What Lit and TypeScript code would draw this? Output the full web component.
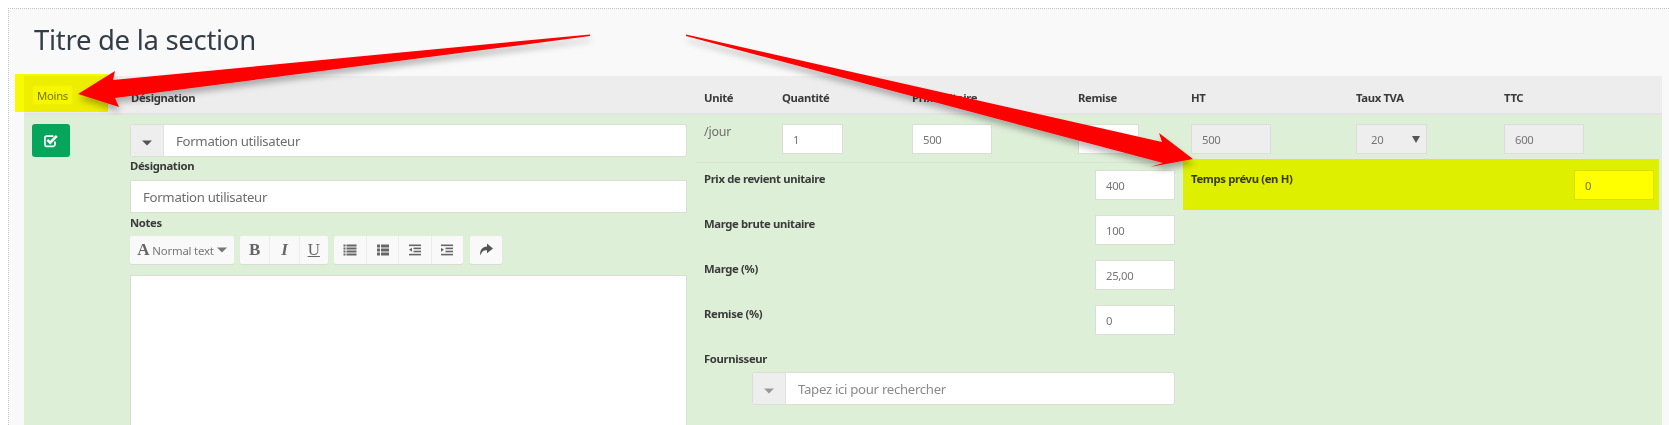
import { LitElement, html, css, svg } from "lit";
import { customElement } from "lit/decorators.js";

const caret = html`<svg class="caret" width="10" height="6" viewBox="0 0 10 6"><path d="M0 0.5h10L5 5.5z" fill="currentColor"/></svg>`;
const g = (body: unknown) => html`<svg width="14" height="14" viewBox="0 0 14 14" fill="#666">${body}</svg>`;
const lines = (x: number, w: number, bullets = false) => svg`${[1, 4, 7, 10].map(
  (y) => svg`<rect x=${x} y=${y + 0.5} width=${w} height="2"/>`
)}${bullets ? [1, 4, 7, 10].map((y) => svg`<rect x="0.5" y=${y + 0.5} width="2" height="2"/>`) : ""}`;

@customElement("app-root")
export class AppRoot extends LitElement {
  static styles = css`
    :host { display: block; width: 1669px; height: 425px; overflow: hidden; background: #fff; position: relative;
      font-family: "Noto Sans", "Open Sans", sans-serif; color: #333; }
    * { box-sizing: border-box; }
    .panel { margin: 8px 0 0 8px; height: 417px; border-top: 1px dotted #c4c4c4; border-left: 1px dotted #c4c4c4;
      background: #f9f9f9; padding: 0 7px 0 15px; overflow: hidden; }
    h1 { margin: 0; padding: 0 0 0 10px; height: 67px; line-height: 62px; font-size: 27.5px; font-weight: 400; color: #333d47; letter-spacing: -0.3px; }
    .label { font-size: 11.3px; font-weight: 700; color: #3a3a3a; line-height: 16px; white-space: nowrap; letter-spacing: -0.35px; }
    .head { display: grid; grid-template-columns: 107px 573px 78px 130px 166px 113px 165px 148px 1fr; height: 39px;
      background: #ededed; border-bottom: 2px solid #e3e3e3; padding-top: 14px; }
    .row { display: grid; grid-template-columns: 106px 557px 1fr; height: 310px; background: #deefd8; padding-top: 9px; }
    .ok { width: 38px; height: 33px; margin-left: 8px; background: #06a55c; border-radius: 3px; display: flex; align-items: center; justify-content: center; }
    .left { display: flex; flex-direction: column; }
    .field { height: 33px; background: #fff; border: 1px solid #d9dfd5; font-size: 13.2px; letter-spacing: -0.3px; color: #6d6d6d; display: flex; align-items: center; flex: none; }
    .plain { padding-left: 12px; }
    .addon { width: 33px; height: 100%; background: #eee; border-right: 1px solid #e3e3e3; color: #555; display: flex; align-items: center; justify-content: center; flex: none; border-radius: 3px 0 0 3px; }
    .addon .caret { margin-top: 4px; }
    .combo { border-radius: 3px; }
    .combo .txt { padding-left: 12px; }
    .left .label.first { margin-top: 1px; margin-bottom: 6px; height: 16px; }
    .left .label.notes { margin-top: 1px; margin-bottom: 6px; height: 16px; padding-top: 1px; }
    .toolbar { display: flex; gap: 6px; height: 28px; margin-bottom: 11px; }
    .grp { display: flex; background: #f9f9f9; border-radius: 2px; box-shadow: 0 1px 1px #d5dcd0; }
    .grp.last { margin-left: 1px; }
    .btn { height: 28px; display: flex; align-items: center; justify-content: center; border-left: 1px solid #ececec; color: #666; }
    .btn:first-child { border-left: 0; }
    .w30 { width: 29.33px; } .w32 { width: 32.25px; }
    .style { width: 104px; gap: 3px; font-size: 11.4px; letter-spacing: -0.2px; color: #777; }
    .style b { font-family: "Liberation Serif", serif; font-size: 17px; color: #666; }
    .serif { font-family: "Liberation Serif", serif; font-size: 17px; font-weight: 700; color: #666; }
    .it { font-style: italic; }
    .un { text-decoration: underline; font-weight: 400; }
    .editor { height: 160px; background: #fff; border: 1px solid #d9dfd5; flex: none; }
    .right { padding: 0 0 0 9px; }
    .top { display: grid; grid-template-columns: 78px 130px 166px 113px 165px 148px 1fr; height: 29px; padding-left: 8px; }
    .top .unit { font-size: 12.4px; letter-spacing: -0.2px; color: #6d6d6d; line-height: 16px; }
    .input { height: 30px; background: #fff; border: 1px solid #d9dfd5; font-size: 11.3px; letter-spacing: -0.3px; color: #757575; display: flex; align-items: center; padding-left: 10px; flex: none; }
    .input.dis, .select { background: #eee; border: 1px solid #dcdcdc; }
    .w60 { width: 61px; } .w80 { width: 80px; } .w71 { width: 71px; }
    .select { justify-content: space-between; padding: 0 6px 0 14px; }
    .rule { height: 1px; background: #d6e4d0; margin-top: 9px; width: 485px; }
    .split { display: grid; grid-template-columns: 479px 1fr; }
    .col { padding: 7px 0 0 8px; }
    .line { display: flex; justify-content: space-between; height: 45px; }
    .line .label { padding-top: 1px; }
    .four { padding-top: 1px; }
    .sup { margin: 0 0 0 48px; width: 423px; }
    .extra { padding: 7px 0 0 16px; height: 45px; display: flex; justify-content: space-between; width: 479px; }
    .extra .label { padding-top: 1px; }
    .highlight { position: absolute; background: #ff0; mix-blend-mode: multiply; pointer-events: none; }
    .h-moins { left: 15px; top: 74px; width: 93px; height: 38px; }
    .h-temps { left: 1183px; top: 159px; width: 476px; height: 51px; }
    .moins { position: absolute; left: 32px; top: 85px; width: 41px; height: 20px; border-radius: 2px; background: #f6f6f6; border: 1px solid #efefef;
      font-size: 11.3px; letter-spacing: -0.3px; color: #777; display: flex; align-items: center; justify-content: center; }
    .arrows { position: absolute; left: 0; top: 0; pointer-events: none; }
    .muted { color: #999; }
    .hint { color: #8a8a8a; }
    .mt5 { margin-top: 5px; }
  `;

  private line(label: string, val: string) {
    return html`<div class="line"><div class="label">${label}</div><div class="input w80">${val}</div></div>`;
  }

  render() {
    return html`
      <div class="panel">
        <h1>Titre de la section</h1>
        <div class="head">
          <div></div>
          <div class="label">Désignation</div>
          <div class="label">Unité</div>
          <div class="label">Quantité</div>
          <div class="label">Prix unitaire</div>
          <div class="label">Remise</div>
          <div class="label">HT</div>
          <div class="label">Taux TVA</div>
          <div class="label">TTC</div>
        </div>
        <div class="row">
          <div>
            <div class="ok">
              <svg width="15" height="14" viewBox="0 0 15 14"><path d="M11 7.5v3a1.8 1.8 0 0 1-1.8 1.8H2.6A1.8 1.8 0 0 1 .9 10.5V4a1.8 1.8 0 0 1 1.8-1.8h6.8" fill="none" stroke="#fff" stroke-width="1.7"/><path d="M3.4 5.8l2.8 2.8 6.6-6.8" fill="none" stroke="#fff" stroke-width="2.5"/></svg>
            </div>
          </div>
          <div class="left">
            <div class="field combo"><div class="addon">${caret}</div><div class="txt">Formation utilisateur</div></div>
            <div class="label first">Désignation</div>
            <div class="field plain">Formation utilisateur</div>
            <div class="label notes">Notes</div>
            <div class="toolbar">
              <div class="grp"><div class="btn style"><b>A</b> Normal text ${caret}</div></div>
              <div class="grp">
                <div class="btn w30 serif">B</div>
                <div class="btn w30 serif it">I</div>
                <div class="btn w30 serif un">U</div>
              </div>
              <div class="grp">
                <div class="btn w32">${g(lines(3.5, 10, true))}</div>
                <div class="btn w32">${g(svg`<rect x="1" y="1.5" width="3" height="3"/><rect x="1" y="5.5" width="3" height="3"/><rect x="1" y="9.5" width="3" height="3"/><rect x="5" y="1.5" width="8" height="3"/><rect x="5" y="5.5" width="8" height="3"/><rect x="5" y="9.5" width="8" height="3"/>`)}</div>
                <div class="btn w32">${g(svg`<rect x="1" y="1.5" width="12" height="1.6"/><rect x="5.5" y="4.6" width="7.5" height="1.6"/><rect x="5.5" y="7.7" width="7.5" height="1.6"/><rect x="1" y="10.8" width="12" height="1.6"/><path d="M4 4.8v4L1 6.8z"/>`)}</div>
                <div class="btn w32">${g(svg`<rect x="1" y="1.5" width="12" height="1.6"/><rect x="5.5" y="4.6" width="7.5" height="1.6"/><rect x="5.5" y="7.7" width="7.5" height="1.6"/><rect x="1" y="10.8" width="12" height="1.6"/><path d="M1 4.8v4l3-2z"/>`)}</div>
              </div>
              <div class="grp last"><div class="btn w32">${g(svg`<path d="M8 .5l6 5-6 4.7V7.2C5 7 3 8 1.4 12.5.4 7 3.6 3.8 8 3.6z" fill="#555"/>`)}</div></div>
            </div>
            <div class="editor"></div>
          </div>
          <div class="right">
            <div class="top">
              <div class="unit">/jour</div>
              <div><div class="input w60">1</div></div>
              <div><div class="input w80">500</div></div>
              <div><div class="input w60"></div></div>
              <div><div class="input w80 dis">500</div></div>
              <div><div class="input w71 select"><span>20</span><svg width="8" height="7" viewBox="0 0 8 7"><path d="M0 0h8L4 7z" fill="#555"/></svg></div></div>
              <div><div class="input w80 dis">600</div></div>
            </div>
            <div class="rule"></div>
            <div class="split">
              <div class="col">
                ${this.line("Prix de revient unitaire", "400")}
                ${this.line("Marge brute unitaire", "100")}
                ${this.line("Marge (%)", "25,00")}
                ${this.line("Remise (%)", "0")}
                <div class="label four">Fournisseur</div>
                <div class="field combo sup mt5"><div class="addon muted">${caret}</div><div class="txt hint">Tapez ici pour rechercher</div></div>
              </div>
              <div class="extra">
                <div class="label">Temps prévu (en H)</div>
                <div class="input w80">0</div>
              </div>
            </div>
          </div>
        </div>
      </div>

      <div class="moins">Moins</div>
      <div class="highlight h-moins"></div>
      <div class="highlight h-temps"></div>

      <svg class="arrows" width="1669" height="425" viewBox="0 0 1669 425">
        <defs><filter id="s" x="-10%" y="-30%" width="120%" height="180%"><feDropShadow dx="1" dy="5" stdDeviation="3" flood-color="#000" flood-opacity="0.28"/></filter></defs>
        <polygon filter="url(#s)" fill="#f00" points="590,34.5 113,80 115,71 78,94 119,107 115,98 590,36"/>
        <polygon filter="url(#s)" fill="#f00" points="686,34.5 1162,142 1159,133 1193,159 1150,167 1163,163 686,36"/>
      </svg>
    `;
  }
}
